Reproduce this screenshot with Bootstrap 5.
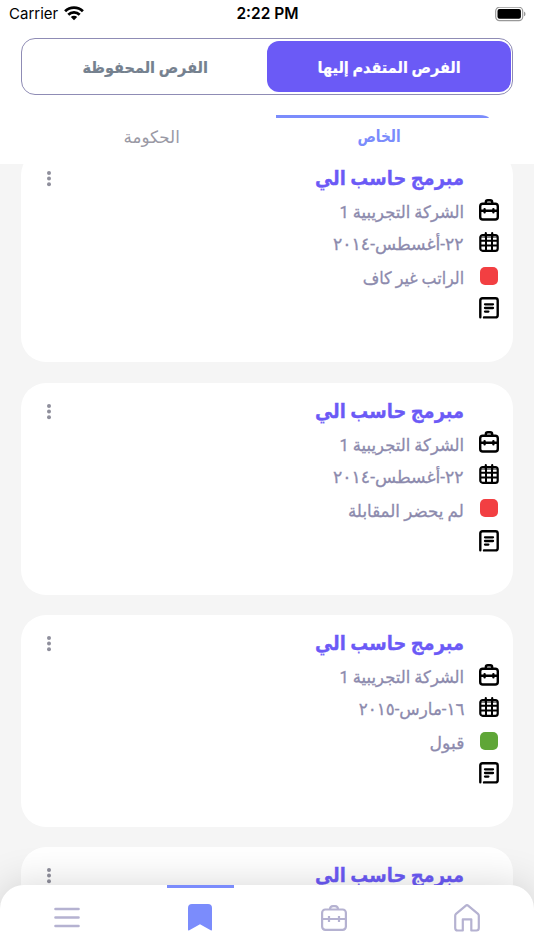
<!DOCTYPE html>
<html lang="ar" dir="rtl">
<head>
<meta charset="utf-8">
<meta name="viewport" content="width=device-width, initial-scale=1">
<title>الفرص</title>
<link href="https://cdn.jsdelivr.net/npm/bootstrap@5.3.0/dist/css/bootstrap.min.css" rel="stylesheet">
<style>
body{width:534px;height:950px;overflow:hidden;background:#f5f5f5;font-family:Roboto,"DejaVu Sans",sans-serif}
.top-area{height:164px;background:#fff}
.status{height:28px;padding:0 8px 0 9px;font-family:Inter,sans-serif;font-size:15px;color:#000}
.status .clock{font-weight:600;font-size:15.5px}
.status .side{width:120px}
.wifi{margin-left:6px;margin-top:-2px}
.switch{width:492px;height:56.500px;margin:10px 21px 0;border:1px solid #8f8cb5;border-radius:14px;padding:1.5px}
.seg{width:50%;font-weight:700;font-size:16px;color:#75818f;border-radius:12px;padding-top:4px;-webkit-text-stroke:.2px currentColor}
.seg.on{background:#6b5af6;color:#fff}
.tab-strip{margin:20.500px 45px 0;height:46px}
.tab-item{width:213px;font-size:17px;line-height:26px;color:#9a99a5;padding-top:9px}
.tab-item.on{font-size:16.500px;color:#7b8cfc;font-weight:700;padding-top:9px;padding-right:6px;position:relative}
.tab-item.on::before{content:"";position:absolute;top:0;left:0;width:213px;height:3px;background:#7b8cfc;border-top-right-radius:10px 3px}
.list-area{height:786px;overflow:hidden}
.list-inner{margin-top:-13.6px}
.job{width:492px;height:212px;margin:0 21px 20.3px;border-radius:25px;background:#fff;padding:10px 14.500px 0 25px}
.job h2{height:34px;line-height:36px;font-size:20px;font-weight:700;color:#6b5af6;margin:0;padding-right:34.500px;-webkit-text-stroke:.3px currentColor}
.line{gap:14.500px;font-size:17px;line-height:24px;color:#8c8aad;-webkit-text-stroke:.3px #8c8aad}
.line>div{padding-top:5px}
.line svg,.sq{width:20px;flex:none}
.l1{height:31px}.l2{height:33px}.l3{height:35px}.l4{height:30px}
.fit{display:inline-block;transform-origin:100% 50%;white-space:nowrap}
.mid{transform-origin:50% 50%}
.s86{transform:scaleX(.83)}.s89{transform:scaleX(.892)}.s90{transform:scaleX(.905)}.s94{transform:scaleX(.938)}
.s96{transform:scaleX(.965)}.s98{transform:scaleX(.984)}.s101{transform:scaleX(1.015)}
.sq span{display:block;width:18px;height:18px;border-radius:5px;margin:auto}
.red{background:#f23f42}.green{background:#5fa637}
.tabbar{height:65px;background:#fff;border-radius:24px 24px 0 0;box-shadow:0 0 40px rgba(0,0,0,.16)}
.tabbar>div{width:25%}
.tabbar .cur{position:relative}
.tabbar .cur::before{content:"";position:absolute;top:0;left:33px;width:67px;height:3px;background:#7b8cfc}
</style>
</head>
<body>
<svg width="0" height="0" class="position-absolute">
<defs>
<symbol id="bag" viewBox="0 0 20 22"><g fill="none" stroke="currentColor" stroke-width="2.400" stroke-linecap="round"><rect x="1.2" y="4.700" width="17.6" height="15.800" rx="2.6"/><path d="M6.8 4.6V3.4Q6.8 1.3 8.8 1.3h2.4q2 0 2 2.1v1.2M1.5 11.800h17M5.6 10.300v3M14.400 10.300v3"/></g></symbol>
<symbol id="cal" viewBox="0 0 20 20"><g fill="none" stroke="currentColor" stroke-width="2.200"><rect x="1.300" y="3" width="17.400" height="15.800" rx="2.400"/><path d="M1.500 8.800h17M1.500 13.600h17M7 4v14.500M13 4v14.500" stroke-width="2"/><path d="M6.800 1.200v4M13.200 1.200v4" stroke-width="2.200" stroke-linecap="round"/></g><path d="M2 3h16v3H2z" fill="currentColor" opacity=".5"/></symbol>
<symbol id="doc" viewBox="0 0 20 22"><g fill="none" stroke="currentColor" stroke-width="2.400" stroke-linecap="round"><path d="M1.300 20.300V3.500Q1.300 1.300 3.500 1.300h13q2.200 0 2.200 2.200v14.700q0 2.200-2.200 2.200H5"/><path d="M6 7.300h8M6 11h8M6 14.600h3.400" stroke-width="2.300"/></g></symbol>
</defs></svg>

<header class="top-area position-relative">
  <div class="status d-flex align-items-center justify-content-between" dir="ltr">
    <div class="side d-flex align-items-center">Carrier
      <svg class="wifi" width="20" height="15" viewBox="0 0 20 15"><g fill="none" stroke="#000" stroke-width="2.8"><path d="M1.1 5.2a12.8 12.8 0 0 1 17.8 0"/><path d="M4.3 8.7a8.2 8.2 0 0 1 11.4 0"/></g><path d="M6.8 11a4.6 4.6 0 0 1 6.4 0L10 14.3z"/></svg>
    </div>
    <div class="clock">2:22 PM</div>
    <div class="side d-flex justify-content-end">
      <svg width="31" height="15" viewBox="0 0 31 15"><rect x=".7" y=".2" width="27" height="13.4" rx="3.8" fill="none" stroke="#999" stroke-width="1.2"/><rect x="2.5" y="2" width="23.4" height="9.8" rx="2"/><path d="M29 4.500v4.8q1.5-.7 1.5-2.4T29 4.500z" fill="#999"/></svg>
    </div>
  </div>
  <div class="switch d-flex">
    <div class="seg on d-flex align-items-center justify-content-center"><span class="fit mid s90">الفرص المتقدم إليها</span></div>
    <div class="seg d-flex align-items-center justify-content-center"><span class="fit mid s90">الفرص المحفوظة</span></div>
  </div>
  <div class="tab-strip d-flex justify-content-between">
    <div class="tab-item on text-center"><span class="fit mid s86">الخاص</span></div>
    <div class="tab-item text-center"><span class="fit mid s98">الحكومة</span></div>
  </div>
</header>

<main class="list-area"><div class="list-inner d-flex flex-column" id="jobs"></div></main>

<nav class="tabbar fixed-bottom d-flex">
  <div class="d-flex align-items-center justify-content-center"><svg width="26" height="28" viewBox="0 0 26 28" fill="none" stroke="#b5b2d1" stroke-width="2.2" stroke-linejoin="round"><path d="M1.2 11.7Q1.2 10.5 2 9.8L11.6 1.8Q13 .6 14.4 1.8L24 9.8q.8.7.8 1.9V24q0 2.5-2.4 2.5h-5.1V15.3H8.8v11.2H3.6Q1.2 26.5 1.2 24z"/></svg></div>
  <div class="d-flex align-items-center justify-content-center"><svg width="26" height="26" viewBox="0 0 26 26" fill="none" stroke="#b5b2d1" stroke-width="2.200"><rect x="1.100" y="4.500" width="23.800" height="20.300" rx="3.200"/><path d="M9 4.500q0-3.400 3-3.400h2q3 0 3 3.400M1 14h24M8 11v6M18 11v6"/></svg></div>
  <div class="cur d-flex align-items-center justify-content-center"><svg width="24" height="27" viewBox="0 0 24 27"><path d="M4 0h16q4 0 4 4v21.500q0 1.500-1.300 .8L12 20.200 1.300 26.300Q0 27 0 25.500V4Q0 0 4 0z" fill="#7b8cfc"/></svg></div>
  <div class="d-flex align-items-center justify-content-center"><svg width="26" height="21" viewBox="0 0 26 21" stroke="#b5b2d1" stroke-width="2.600" stroke-linecap="round"><path d="M1.500 2h23M1.500 10.500h23M1.500 19h23"/></svg></div>
</nav>

<script>
const jobs = [
  ["٢٢-أغسطس-٢٠١٤", "s101", "الراتب غير كاف", "s94", "red"],
  ["٢٢-أغسطس-٢٠١٤", "s101", "لم يحضر المقابلة", "s98", "red"],
  ["١٦-مارس-٢٠١٥", "s98", "قبول", "s101", "green"],
  ["١٦-مارس-٢٠١٥", "s98", "قبول", "s101", "green"]
];
document.getElementById("jobs").innerHTML = jobs.map(([date, ds, note, ns, tone], i) => `
<article class="job flex-shrink-0">
  <div class="d-flex justify-content-between">
    <h2><span class="fit s89">مبرمج حاسب الي</span></h2>
    <svg width="6" height="33" viewBox="0 0 6 33" fill="#8f8f9c"><circle cx="3" cy="13" r="2"/><circle cx="3" cy="18.600" r="2"/><circle cx="3" cy="24.200" r="2"/></svg>
  </div>
  ${i < 3 ? `
  <div class="line l1 d-flex align-items-center text-nowrap"><svg height="22" color="#000"><use href="#bag"/></svg><div><span class="fit s96">الشركة التجريبية 1</span></div></div>
  <div class="line l2 d-flex align-items-center"><svg height="20" color="#000"><use href="#cal"/></svg><div><span class="fit ${ds}">${date}</span></div></div>
  <div class="line l3 d-flex align-items-center"><div class="sq p-0"><span class="${tone}"></span></div><div><span class="fit ${ns}">${note}</span></div></div>
  <div class="line l4 d-flex align-items-center"><svg height="22" color="#000"><use href="#doc"/></svg></div>` : ""}
</article>`).join("");
</script>
<script src="https://cdn.jsdelivr.net/npm/bootstrap@5.3.0/dist/js/bootstrap.bundle.min.js"></script>
</body>
</html>
